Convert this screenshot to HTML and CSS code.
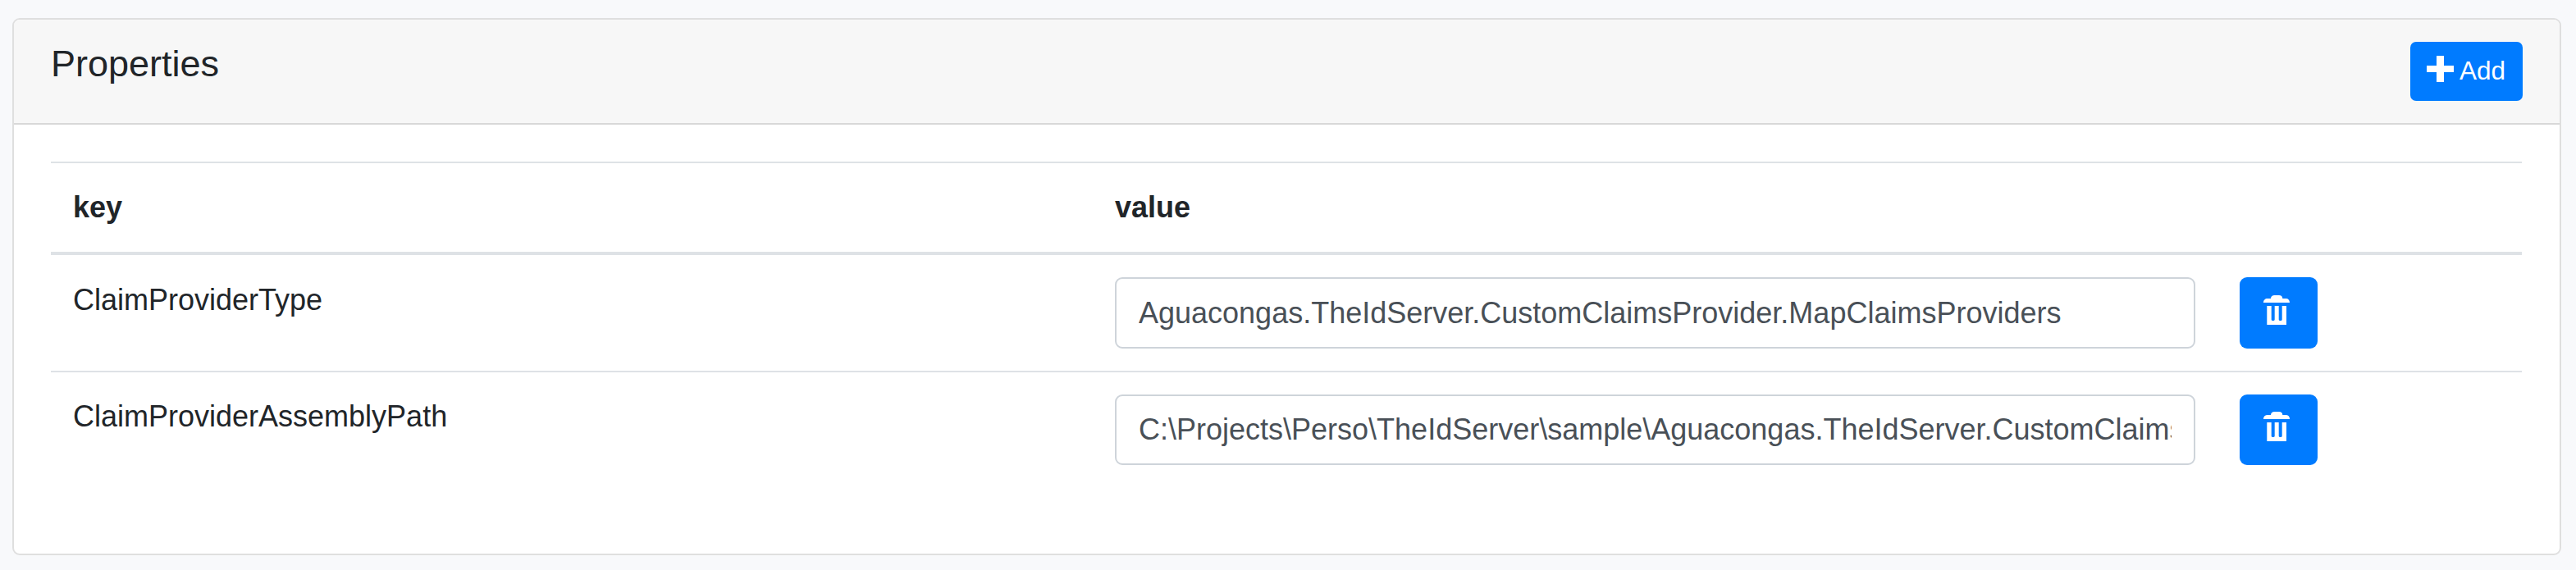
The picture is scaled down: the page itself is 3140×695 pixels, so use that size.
FILE: index.html
```html
<!DOCTYPE html>
<html lang="en">
<head>
<meta charset="utf-8">
<title>Properties</title>
<link rel="stylesheet" href="styles.css">
</head>
<body>
<section class="card">
  <header class="card-header">
    <h2 class="card-title">Properties</h2>
    <button class="btn btn-add" type="button">
      <svg class="icon-plus" viewBox="0 0 33 32"><path d="M12 0h9v12h12v8H21v12h-9V20H0v-8h12z"/></svg>
      <span>Add</span>
    </button>
  </header>
  <div class="card-body">
    <div class="row row-head">
      <div class="cell">key</div>
      <div class="cell">value</div>
      <div class="cell"></div>
    </div>
    <div class="row row-first">
      <div class="cell cell-key">ClaimProviderType</div>
      <div class="cell"><input class="field" type="text" aria-label="ClaimProviderType" value="Aguacongas.TheIdServer.CustomClaimsProvider.MapClaimsProviders"></div>
      <div class="cell">
        <button class="btn btn-delete" type="button" aria-label="Delete">
          <svg class="icon-trash" viewBox="0 0 32 36"><path d="M0 9c0-3 2-5 5-5h4c0-2.500 2-4 4.500-4h5.500c2.500 0 4.300 1.500 4.300 4h4c3 0 4.700 2 4.700 5zM4.300 13H9.700v16.500c0 2 4 2 4 0V13h5v16.500c0 2 4 2 4 0V13H28v23H4.300z"/></svg>
        </button>
      </div>
    </div>
    <div class="row row-next">
      <div class="cell cell-key">ClaimProviderAssemblyPath</div>
      <div class="cell"><input class="field" type="text" aria-label="ClaimProviderAssemblyPath" value="C:\Projects\Perso\TheIdServer\sample\Aguacongas.TheIdServer.CustomClaimsProvider"></div>
      <div class="cell">
        <button class="btn btn-delete" type="button" aria-label="Delete">
          <svg class="icon-trash" viewBox="0 0 32 36"><path d="M0 9c0-3 2-5 5-5h4c0-2.500 2-4 4.500-4h5.500c2.500 0 4.300 1.500 4.300 4h4c3 0 4.700 2 4.700 5zM4.300 13H9.700v16.500c0 2 4 2 4 0V13h5v16.500c0 2 4 2 4 0V13H28v23H4.300z"/></svg>
        </button>
      </div>
    </div>
  </div>
</section>
</body>
</html>
```
FILE: styles.css
```css
* { box-sizing: border-box; }

body {
  margin: 0;
  padding: 22px 18px 18px 15px;
  height: 695px;
  overflow: hidden;
  background: #f8f9fb;
  color: #212529;
  font: 36px/54px "Liberation Sans", Arial, sans-serif;
}

.card {
  height: 655px;
  background: #fff;
  border: 2px solid #dfdfdf;
  border-radius: 9px;
  overflow: hidden;
}

.card-header {
  display: flex;
  justify-content: space-between;
  align-items: flex-start;
  height: 128px;
  padding: 27px 45px;
  background: #f7f7f7;
  border-bottom: 2px solid #d8d8d8;
}

.card-title {
  margin: 0;
  font-size: 45px;
  font-weight: 400;
  line-height: 54px;
}

.btn {
  display: flex;
  align-items: flex-start;
  margin: 0;
  border: 0;
  background: #007bff;
  color: #fff;
  font-family: inherit;
}

.btn svg { display: block; fill: currentColor; }

.btn-add {
  width: 137px;
  height: 72px;
  padding: 12px 20px;
  gap: 7px;
  border-radius: 7px;
  font-size: 31.5px;
  line-height: 47px;
}

.icon-plus {
  flex: none;
  width: 33px;
  height: 32px;
  margin-top: 5px;
}

.card-body { padding: 45px 46px 0 45px; }

.row {
  display: grid;
  grid-template-columns: 1270px 1371px 1fr;
  border-top: 2px solid #dee2e6;
}

.cell { padding: 27px; }

.row-head {
  height: 114px;
  border-bottom: 4px solid #dee2e6;
  font-weight: 700;
}

.row-first {
  height: 141px;
  border-top: 0;
}

.row-first .cell-key { padding-top: 28px; }

.row-next { height: 142px; }

.field {
  display: block;
  width: 100%;
  height: 87px;
  margin: 0;
  padding: 0 27px;
  border: 2px solid #ced4da;
  border-radius: 9px;
  background: #fff;
  color: #495057;
  font: inherit;
}

.btn-delete {
  width: 95px;
  height: 87px;
  padding: 22px 29px;
  border-radius: 9px;
}

.icon-trash {
  flex: none;
  width: 32px;
  height: 36px;
}

.row-next .field,
.row-next .btn-delete { height: 86px; }

.row-next .btn-delete { padding-top: 21px; }
```
